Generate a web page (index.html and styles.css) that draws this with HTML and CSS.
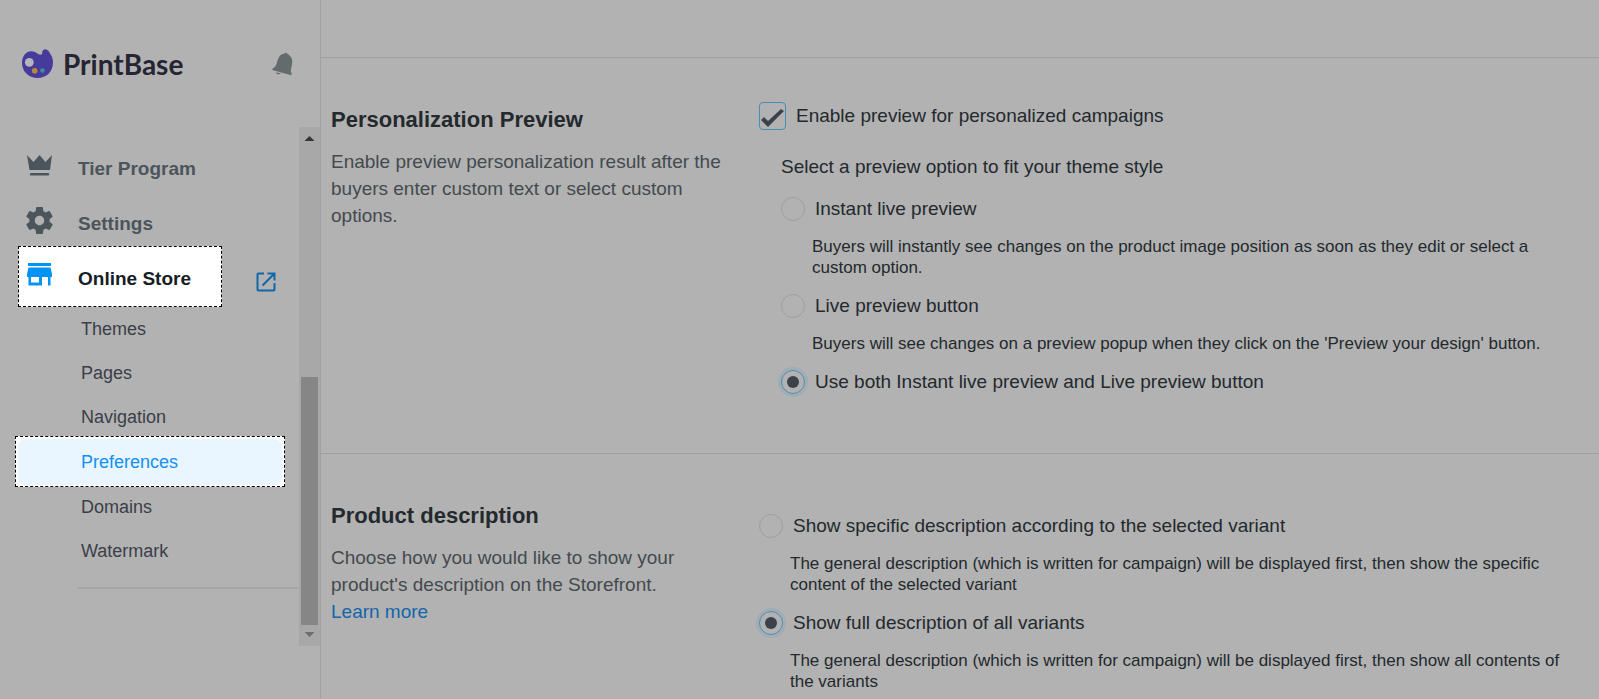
FILE: index.html
```html
<!DOCTYPE html>
<html lang="en">
<head>
<meta charset="utf-8">
<title>PrintBase - Preferences</title>
<meta name="viewport" content="width=device-width, initial-scale=1">
<link rel="stylesheet" href="styles.css">
</head>
<body>
<div class="app">
  <aside class="sidebar">
    <header class="brand-bar">
      <a class="brand" href="#">
        <svg class="brand-mark" viewBox="0 0 31 29" aria-hidden="true">
          <path fill="#463b9b" d="M20 5.500C20 2 21 .3 23 .2C25.500 .1 27.500 2.500 28.500 5.300C30.300 7.700 31 10.500 31 13.500C31 22.500 24.500 29 15.500 29C6.500 29 0 22.500 0 13.800C0 7 4 2.200 9.500 2.200C14 2.200 15.500 5.500 18 5.500Z"/>
          <circle cx="7.300" cy="13.300" r="4.400" fill="#b8b6bd"/>
          <circle cx="12.700" cy="21.700" r="2.800" fill="#b9873f"/>
          <circle cx="20.400" cy="21.500" r="2.200" fill="#30969a"/>
        </svg>
        <span class="brand-name">PrintBase</span>
      </a>
      <button class="bell" type="button" aria-label="Notifications">
        <svg viewBox="0 0 20 24" aria-hidden="true">
          <path fill="#636b6e" d="M12.700 1.600C13.200 .2 15.600 .6 15.600 2.300C19 3.600 20.800 7.300 20.200 11.500C19.800 14.800 18.600 17 18.900 19.500L19.700 21.500L19.200 23.200L.2 18L.7 16.500C3 15.500 4 13.800 5 10.500C6.300 5 8.800 1.700 12.700 1.600Z"/>
          <path fill="#636b6e" d="M3.800 20.200L9 21.500C7.600 22.900 4.600 22.400 3.800 20.200Z"/>
        </svg>
      </button>
    </header>
    <div class="nav-area">
      <nav class="nav">
        <div class="nav-row">
          <a class="nav-link" href="#">
            <svg class="nav-icon" viewBox="0 0 27 27" aria-hidden="true"><path fill="#4c555b" d="M1 3L7.500 10L13.500 3L19.500 10L26 3L24 18H3.500ZM5 21H22A1 1 0 0 1 22 23.500H5A1 1 0 0 1 5 21Z"/></svg>
            <span>Tier Program</span>
          </a>
        </div>
        <div class="nav-row">
          <a class="nav-link" href="#">
            <svg class="nav-icon" viewBox="2 2 20 20" aria-hidden="true"><path fill="#4c555b" d="M19.430 12.980c.04-.32.07-.64.07-.98s-.03-.66-.07-.98l2.110-1.650c.19-.15.24-.42.12-.64l-2-3.460c-.12-.22-.39-.3-.61-.22l-2.490 1c-.52-.4-1.080-.73-1.690-.98l-.38-2.650C14.460 2.180 14.250 2 14 2h-4c-.25 0-.46.18-.49.42l-.38 2.650c-.61.25-1.170.59-1.690.98l-2.490-1c-.23-.09-.49 0-.61.22l-2 3.460c-.13.22-.07.49.12.64l2.110 1.650c-.04.32-.07.65-.07.98s.03.66.07.98l-2.110 1.650c-.19.15-.24.42-.12.64l2 3.460c.12.22.39.3.61.22l2.490-1c.52.4 1.080.73 1.690.98l.38 2.650c.03.24.24.42.49.42h4c.25 0 .46-.18.49-.42l.38-2.650c.61-.25 1.170-.59 1.690-.98l2.490 1c.23.09.49 0 .61-.22l2-3.460c.12-.22.07-.49-.12-.64l-2.110-1.650zM12 15.500c-1.930 0-3.500-1.570-3.500-3.500s1.570-3.500 3.500-3.500 3.500 1.570 3.500 3.500-1.570 3.500-3.500 3.500z"/></svg>
            <span>Settings</span>
          </a>
        </div>
        <div class="nav-row">
          <a class="nav-link nav-link-active" href="#">
            <svg class="nav-icon" viewBox="0 0 27 27" aria-hidden="true"><path fill="#0294f5" fill-rule="evenodd" d="M2 1H25V4H2ZM2.500 5.500H24.500L26 12V15H24.500V23.500H22V15H16V23.500H2.500V15H1V12ZM5 15V20.500H13V15Z"/></svg>
            <span>Online Store</span>
          </a>
          <a class="open-store" href="#" aria-label="Open online store">
            <svg viewBox="0 0 20 20" fill="none" stroke="#0e68ac" stroke-width="2" aria-hidden="true"><path d="M8 1.500H2.500Q1.500 1.500 1.500 2.500V17.500Q1.500 18.500 2.500 18.500H17.500Q18.500 18.500 18.500 17.500V11M11.500 1.500H18.500V8.500M18.500 1.500L6.500 13.500"/></svg>
          </a>
        </div>
        <ul class="subnav">
          <li><a class="subnav-link" href="#">Themes</a></li>
          <li><a class="subnav-link" href="#">Pages</a></li>
          <li><a class="subnav-link" href="#">Navigation</a></li>
          <li><a class="subnav-link subnav-link-active" href="#" aria-current="page">Preferences</a></li>
          <li><a class="subnav-link" href="#">Domains</a></li>
          <li><a class="subnav-link" href="#">Watermark</a></li>
        </ul>
        <hr class="nav-divider">
      </nav>
      <div class="scrollbar" aria-hidden="true">
        <span class="arrow arrow-up"></span>
        <span class="thumb"></span>
        <span class="arrow arrow-down"></span>
      </div>
    </div>
  </aside>

  <main class="content">
    <div class="topbar"></div>
    <section class="section">
      <div class="intro">
        <h2>Personalization Preview</h2>
        <p>Enable preview personalization result after the buyers enter custom text or select custom options.</p>
      </div>
      <div class="fields fields-preview">
        <label class="choice"><input class="check" type="checkbox" checked><span>Enable preview for personalized campaigns</span></label>
        <div class="nested" role="radiogroup" aria-labelledby="preview-title">
          <p class="group-title" id="preview-title">Select a preview option to fit your theme style</p>
          <label class="choice"><input class="radio" type="radio" name="preview"><span>Instant live preview</span></label>
          <p class="help">Buyers will instantly see changes on the product image position as soon as they edit or select a custom option.</p>
          <label class="choice"><input class="radio" type="radio" name="preview"><span>Live preview button</span></label>
          <p class="help">Buyers will see changes on a preview popup when they click on the 'Preview your design' button.</p>
          <label class="choice"><input class="radio" type="radio" name="preview" checked><span>Use both Instant live preview and Live preview button</span></label>
        </div>
      </div>
    </section>
    <section class="section section-last">
      <div class="intro">
        <h2>Product description</h2>
        <p>Choose how you would like to show your product's description on the Storefront. <a class="more" href="#">Learn more</a></p>
      </div>
      <div class="fields fields-description">
        <label class="choice"><input class="radio" type="radio" name="description"><span>Show specific description according to the selected variant</span></label>
        <p class="help">The general description (which is written for campaign) will be displayed first, then show the specific content of the selected variant</p>
        <label class="choice"><input class="radio" type="radio" name="description" checked><span>Show full description of all variants</span></label>
        <p class="help help-last">The general description (which is written for campaign) will be displayed first, then show all contents of the variants</p>
      </div>
    </section>
  </main>
</div>
</body>
</html>
```
FILE: styles.css
```css
* {
  box-sizing: border-box;
}

body {
  margin: 0;
  background: #b2b2b2;
  color: #23292d;
  font-family: "Liberation Sans", Arial, sans-serif;
  font-size: 19px;
  line-height: 24px;
}

a {
  text-decoration: none;
}

p,
h2,
ul {
  margin: 0;
  padding: 0;
}

.app {
  display: grid;
  grid-template-columns: 321px minmax(0, 1fr);
  min-height: 100vh;
}

/* Sidebar */

.sidebar {
  border-right: 1px solid #a1a1a1;
}

.brand-bar {
  display: flex;
  align-items: center;
  justify-content: space-between;
  height: 127px;
  padding: 0 28px 0 22px;
}

.brand {
  display: flex;
  align-items: center;
  gap: 10px;
  color: #262533;
}

.brand-mark {
  width: 31px;
  height: 29px;
}

.brand-name {
  font-family: Lato, sans-serif;
  font-size: 28px;
  font-weight: 700;
  line-height: 32px;
}

.bell {
  padding: 0;
  border: 0;
  background: none;
}

.bell svg {
  display: block;
  width: 20px;
  height: 24px;
  overflow: visible;
}

.nav-area {
  display: flex;
}

.nav {
  flex: 1;
  padding: 15px 0 57px;
}

.nav-row {
  display: flex;
  align-items: center;
  height: 55px;
  padding: 0 23px 0 18px;
  justify-content: space-between;
}

.nav-link {
  position: relative;
  display: flex;
  align-items: center;
  gap: 25px;
  width: 204px;
  height: 55px;
  padding: 0 0 2px 8px;
  color: #4c555b;
  font-weight: 700;
}

.nav-icon {
  width: 27px;
  height: 27px;
  margin-bottom: 6px;
}

.nav-link-active {
  color: #161d25;
}

.nav-link-active::before {
  content: "";
  position: absolute;
  inset: -6px 0 0;
  z-index: -1;
  border: 1px dashed #000;
  background: #fff;
}

.open-store {
  padding-top: 5px;
}

.open-store svg {
  display: block;
  width: 20px;
  height: 20px;
}

.subnav {
  list-style: none;
}

.subnav-link {
  position: relative;
  display: block;
  padding-left: 81px;
  color: #3a3f49;
  font-size: 18px;
  line-height: 44px;
}

.subnav-link-active {
  margin: 0 17px 0 18px;
  padding-left: 63px;
  border-radius: 8px;
  background: #e9f6ff;
  color: #1390f4;
  line-height: 46px;
}

.subnav-link-active::before {
  content: "";
  position: absolute;
  inset: -3px -3px -2px;
  z-index: -1;
  border: 1px dashed #000;
  background: #fff;
}

.nav-divider {
  height: 2px;
  margin: 14px 0 0 78px;
  border: 0;
  background: #a6a6a6;
}

.scrollbar {
  display: flex;
  flex-direction: column;
  align-items: center;
  justify-content: flex-end;
  gap: 7px;
  width: 21px;
  padding: 9px 0;
  background: #a8a8a8;
}

.arrow {
  width: 10px;
  height: 5px;
}

.arrow-up {
  margin-bottom: auto;
  background: #343434;
  clip-path: polygon(50% 0, 100% 100%, 0 100%);
}

.arrow-down {
  background: #6e6e6e;
  clip-path: polygon(0 0, 100% 0, 50% 100%);
}

.thumb {
  width: 17px;
  height: 248px;
  background: #868686;
}

/* Main content */

.topbar {
  height: 58px;
  border-bottom: 1px solid #a0a0a0;
}

.section {
  display: grid;
  grid-template-columns: 404px minmax(0, 1fr);
  gap: 24px;
  padding: 0 10px;
  border-bottom: 1px solid #a0a0a0;
}

.section-last {
  border-bottom: 0;
}

.intro {
  padding-top: 48px;
}

.intro h2 {
  margin-bottom: 14px;
  font-size: 22px;
  line-height: 28px;
}

.intro p {
  color: #434a4e;
  line-height: 27px;
}

.more {
  display: block;
  color: #1266ac;
}

.fields-preview {
  padding: 44px 0 59px;
}

.fields-description {
  padding-top: 60px;
}

.nested {
  padding: 25px 0 0 22px;
}

.group-title {
  margin-bottom: 18px;
}

.choice {
  display: flex;
  align-items: center;
  gap: 10px;
}

.help {
  margin: 15px 18px 16px 31px;
  font-size: 17px;
  line-height: 21px;
}

.help-last {
  margin-bottom: 7px;
}

.check,
.radio {
  flex: none;
  appearance: none;
  margin: 0;
  border: 1px solid #9e9e9e;
}

.check {
  width: 27px;
  height: 28px;
  border-color: #4a8cb5;
  border-radius: 4px;
}

.check:checked::before {
  content: "";
  display: block;
  width: 25px;
  height: 26px;
  background: #3c424a;
  clip-path: polygon(1px 17px, 4px 14px, 8px 18px, 21px 6px, 24px 8px, 8px 24px);
}

.radio {
  display: grid;
  place-items: center;
  width: 24px;
  height: 24px;
  border-radius: 50%;
}

.radio:checked {
  border-color: #4a8cb5;
  box-shadow: 0 0 0 3px #a0adb5;
}

.radio:checked::before {
  content: "";
  width: 12px;
  height: 12px;
  border-radius: 50%;
  background: #3c424a;
}
```
